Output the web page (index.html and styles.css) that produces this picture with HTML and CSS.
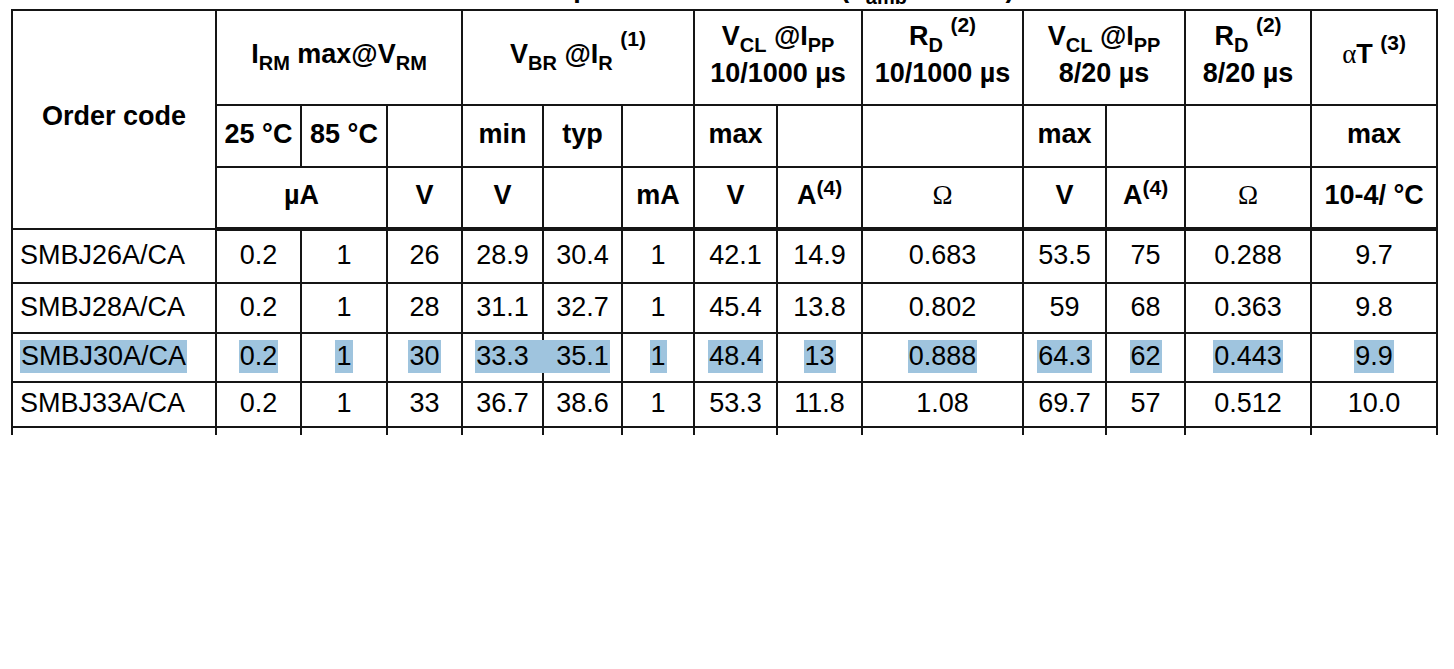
FILE: index.html
```html
<!doctype html>
<html lang="en">
<head>
    <meta charset="UTF-8">
    <title>SMBJ electrical characteristics</title>
    <link rel="stylesheet" href="styles.css">
</head>
<body>
<div class="sheet">
    <!--表头标题，只露出下沿-->
    <div class="caption">
        <div class="caption-line">Electrical characteristics - parameter values<span class="cond">(T<sub>amb</sub> = 25 °C)</span></div>
    </div>

    <table class="spec">
        <colgroup>
            <col class="w-code">
            <col class="w85"><col class="w86"><col class="w75">
            <col class="w81"><col class="w79"><col class="w72">
            <col class="w83"><col class="w85">
            <col class="w161">
            <col class="w83"><col class="w79">
            <col class="w126"><col class="w126">
        </colgroup>
        <thead>
        <tr class="h1">
            <th rowspan="3">Order code</th>
            <th colspan="3">I<sub>RM</sub> max@V<sub>RM</sub></th>
            <th colspan="3">V<sub>BR</sub> @I<sub>R</sub> <sup class="up">(1)</sup></th>
            <th colspan="2">V<sub>CL</sub> @I<sub>PP</sub><br>10/1000 µs</th>
            <th>R<sub>D</sub> <sup>(2)</sup><br>10/1000 µs</th>
            <th colspan="2">V<sub>CL</sub> @I<sub>PP</sub><br>8/20 µs</th>
            <th>R<sub>D</sub> <sup>(2)</sup><br>8/20 µs</th>
            <th><span class="greek">α</span>T <sup>(3)</sup></th>
        </tr>
        <tr class="h2">
            <th>25 °C</th><th>85 °C</th><th></th>
            <th>min</th><th>typ</th><th></th>
            <th>max</th><th></th>
            <th></th>
            <th>max</th><th></th>
            <th></th>
            <th>max</th>
        </tr>
        <tr class="h3">
            <th colspan="2">µA</th><th>V</th>
            <th>V</th><th></th><th>mA</th>
            <th>V</th><th>A<sup class="low">(4)</sup></th>
            <th><span class="greek">Ω</span></th>
            <th>V</th><th>A<sup class="low">(4)</sup></th>
            <th><span class="greek">Ω</span></th>
            <th>10-4/ °C</th>
        </tr>
        </thead>
        <tbody>
        <tr class="r1">
            <td class="code">SMBJ26A/CA</td><td>0.2</td><td>1</td><td>26</td>
            <td>28.9</td><td>30.4</td><td>1</td><td>42.1</td><td>14.9</td>
            <td>0.683</td><td>53.5</td><td>75</td><td>0.288</td><td>9.7</td>
        </tr>
        <tr class="r2">
            <td class="code">SMBJ28A/CA</td><td>0.2</td><td>1</td><td>28</td>
            <td>31.1</td><td>32.7</td><td>1</td><td>45.4</td><td>13.8</td>
            <td>0.802</td><td>59</td><td>68</td><td>0.363</td><td>9.8</td>
        </tr>
        <!--被选中的一行-->
        <tr class="r3">
            <td class="code"><span class="sel">SMBJ30A/CA</span></td><td><span class="sel">0.2</span></td><td><span class="sel">1</span></td><td><span class="sel">30</span></td>
            <td><span class="sel ext-r">33.3</span></td><td><span class="sel ext-l">35.1</span></td><td><span class="sel">1</span></td><td><span class="sel">48.4</span></td><td><span class="sel">13</span></td>
            <td><span class="sel">0.888</span></td><td><span class="sel">64.3</span></td><td><span class="sel">62</span></td><td><span class="sel">0.443</span></td><td><span class="sel">9.9</span></td>
        </tr>
        <tr class="r4">
            <td class="code">SMBJ33A/CA</td><td>0.2</td><td>1</td><td>33</td>
            <td>36.7</td><td>38.6</td><td>1</td><td>53.3</td><td>11.8</td>
            <td>1.08</td><td>69.7</td><td>57</td><td>0.512</td><td>10.0</td>
        </tr>
        <tr class="r5">
            <td></td><td></td><td></td><td></td><td></td><td></td><td></td>
            <td></td><td></td><td></td><td></td><td></td><td></td><td></td>
        </tr>
        </tbody>
    </table>
</div>
</body>
</html>
```

FILE: styles.css
```css
*{
    padding: 0;
    margin: 0;
}
body{
    background: #fff;
    color: #000;
    font-family: "Liberation Sans", Arial, sans-serif;
}
.sheet{
    height: 435px;
    overflow: hidden;
}

/* 标题 */
.caption{
    height: 9px;
    overflow: hidden;
    padding-left: 231px;
    font-size: 27px;
    font-weight: bold;
    white-space: nowrap;
}
.caption-line{
    line-height: 27px;
    margin-top: -25px;
}
.caption .cond{
    margin-left: 45px;
}

/* 表格 */
.spec{
    border-collapse: collapse;
    table-layout: fixed;
    width: 1427px;
    margin-left: 11px;
    font-size: 27px;
}
.spec th,
.spec td{
    border: 2px solid #151515;
    padding: 0;
    text-align: center;
    vertical-align: middle;
    white-space: nowrap;
}
.spec th{
    font-weight: bold;
}
.w-code{ width: 204px; }
.w85{ width: 85px; }
.w86{ width: 86px; }
.w75{ width: 75px; }
.w81{ width: 81px; }
.w79{ width: 79px; }
.w72{ width: 72px; }
.w83{ width: 83px; }
.w161{ width: 161px; }
.w126{ width: 126px; }

.h1 th{
    height: 87px;
    line-height: 37px;
    padding-bottom: 6px;
}
.h2 th{
    height: 55px;
    line-height: 30px;
    padding-bottom: 5px;
}
.h3 th{
    height: 54px;
    line-height: 30px;
    padding-bottom: 5px;
    border-bottom-width: 4px;
}

sub{
    font-size: 20px;
    vertical-align: -7px;
    line-height: 0;
}
sup{
    font-size: 21px;
    vertical-align: 13px;
    line-height: 0;
}
sup.up{
    vertical-align: 17px;
}
sup.low{
    vertical-align: 9px;
}
.greek{
    font-family: "Liberation Serif", "Times New Roman", serif;
    font-weight: normal;
}

.spec td{
    line-height: 30px;
    padding-bottom: 3px;
}
.spec td.code{
    text-align: left;
    padding-left: 7px;
}
.r1 td{ height: 48px; }
.r2 td{ height: 45px; }
.r3 td{ height: 44px; }
.r4 td{ height: 40px; }
.r5 td{ height: 40px; }

/* 选中高亮 */
.sel{
    display: inline-block;
    line-height: 33px;
    padding: 0 1px;
    background: #9fc4de;
}
.sel.ext-r{
    box-shadow: 13px 0 0 #9fc4de;
}
.sel.ext-l{
    box-shadow: -15px 0 0 #9fc4de;
}
```
